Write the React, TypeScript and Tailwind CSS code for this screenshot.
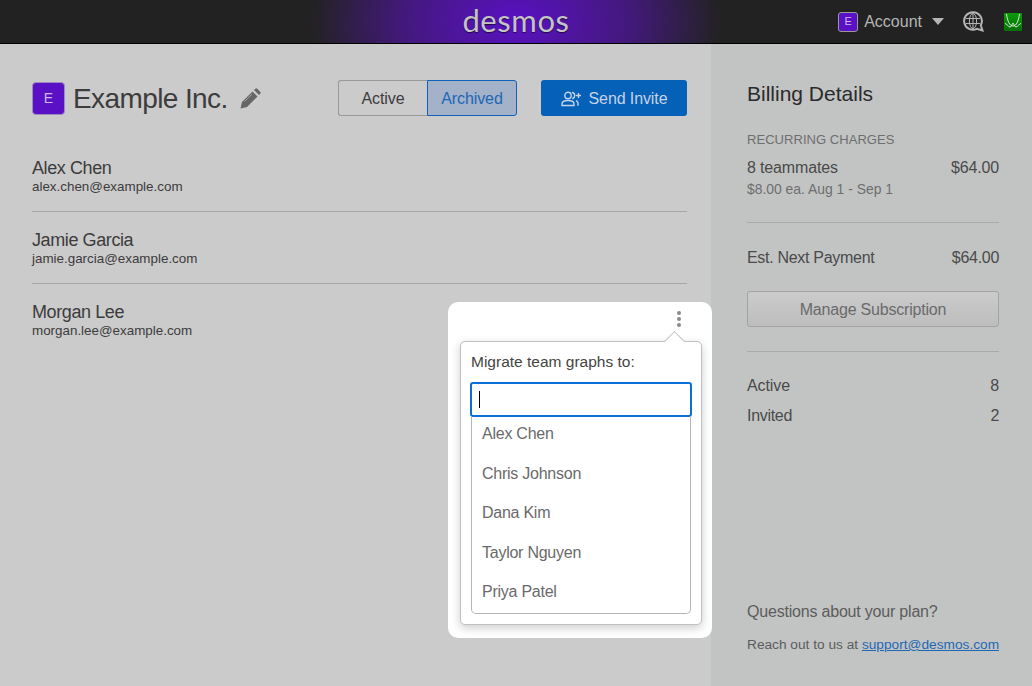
const members = [
  { name: 'Alex Chen', email: 'alex.chen@example.com' },
  { name: 'Jamie Garcia', email: 'jamie.garcia@example.com' },
  { name: 'Morgan Lee', email: 'morgan.lee@example.com' },
];

const options = ['Alex Chen', 'Chris Johnson', 'Dana Kim', 'Taylor Nguyen', 'Priya Patel'];

function Header() {
  return (
    <div className="relative h-[44px] flex items-center justify-end bg-[#222222] border-b border-black">
      <div className="absolute left-[310px] top-0 h-[43px] w-[412px] bg-[radial-gradient(ellipse_50%_300%_at_center,#5a10c4_0%,#43197c_55%,#222222_100%)] flex items-center justify-center">
        <span className="text-[31px] leading-none text-[#c4c4c4] tracking-[0.6px] font-['Lato',sans-serif] pb-[3px] [text-shadow:0_1px_1px_rgba(0,0,0,0.6)]">desmos</span>
      </div>
      <div className="relative flex items-center text-[#b5b5b5] pr-[10px]">
        <div className="w-[20px] h-[20px] rounded-[3px] border border-[#9a9a9a] bg-[#5a10c4] text-[#cdb8ea] text-[11px] flex items-center justify-center">E</div>
        <span className="ml-[6px] text-[16px]">Account</span>
        <div className="ml-[10px] w-0 h-0 border-l-[6.5px] border-r-[6.5px] border-t-[7px] border-l-transparent border-r-transparent border-t-[#b5b5b5]" />
        <svg className="ml-[19px]" width="21" height="21" viewBox="0 0 21 21" fill="none" stroke="#b5b5b5">
          <path d="M10 1.200a8.800 8.800 0 1 0 3.800 16.700l5.700 1.600-1.700-5.300a8.800 8.800 0 0 0-7.800-13z" strokeWidth="2" fill="#222222" />
          <ellipse cx="10" cy="10" rx="3.600" ry="7.500" strokeWidth="1" />
          <path d="M10 2.500v15M3 7.500h14M3 12.500h14" strokeWidth="1" />
        </svg>
        <svg className="ml-[20px]" width="18" height="18" viewBox="0 0 18 18" fill="none">
          <defs>
            <linearGradient id="graph-green" x1="0" y1="0" x2="0" y2="1">
              <stop offset="0" stopColor="#0b9c0b" />
              <stop offset="1" stopColor="#066f06" />
            </linearGradient>
          </defs>
          <rect width="18" height="18" rx="1" fill="url(#graph-green)" />
          <path d="M2.500 1c1 7 3 12 6.500 12s5.500-5 6.500-12" stroke="#d5ecd5" strokeWidth="1" />
          <path d="M1 10.500c2 0 3 3.500 5 3.500s2-4 3-4 1 4 3 4 3-3.500 5-3.500" stroke="#d5ecd5" strokeWidth="1" />
        </svg>
      </div>
    </div>
  );
}

function MigratePopup() {
  return (
    <div className="absolute left-[448px] top-[302px] w-[264px] h-[336px] bg-white rounded-[10px] z-10">
      <div className="absolute left-[229px] top-[9px] flex flex-col gap-[2px]">
        {[0, 1, 2].map((i) => (
          <div key={i} className="w-[4px] h-[4px] rounded-full bg-[#8a8a8a]" />
        ))}
      </div>
      <div className="absolute left-[12px] top-[39px] w-[242px] h-[284px] rounded-[5px] border border-[#c0c0c0] bg-white shadow-[0_3px_10px_rgba(0,0,0,0.2)] px-[10px] pt-[10px]">
        <div className="absolute left-[206px] top-[-8px] w-[15px] h-[15px] rotate-45 bg-white border-l border-t border-[#c0c0c0]" />
        <div className="relative text-[15.5px] leading-[20px] text-[#444444]">Migrate team graphs to:</div>
        <div className="relative mt-[10px] -mx-px h-[35px] rounded-[3px] border-2 border-[#0a6fd8] flex items-center pl-[7px]">
          <div className="w-px h-[17px] bg-black" />
        </div>
        <div className="relative mt-[-1px] h-[198px] rounded-b-[5px] border border-t-0 border-[#b5b5b5]">
          {options.map((o) => (
            <div key={o} className="h-[39.500px] pl-[10px] pb-[3px] flex items-center text-[16px] tracking-[-0.25px] text-[#6a6a6a]">{o}</div>
          ))}
        </div>
      </div>
    </div>
  );
}

export default function App() {
  return (
    <div className="relative w-[1032px] h-[686px] overflow-hidden flex flex-col bg-[#cbcbcb] font-['Liberation_Sans',sans-serif]">
      <Header />
      <div className="flex flex-1">
        <div className="w-[711px] pl-[32px] pr-[24px] pt-[36px]">
          <div className="flex items-center h-[36px]">
            <div className="w-[33px] h-[33px] rounded-[4px] border border-[#9d8ac0] bg-[#5a10c4] text-[#cdb8ea] text-[14px] flex items-center justify-center">E</div>
            <span className="ml-[8px] pt-[1px] text-[28px] tracking-[-0.6px] text-[#3c3c3c]">Example Inc.</span>
            <svg className="ml-[12px]" width="21" height="21" viewBox="0 0 21 21" fill="#666666">
              <path d="M.5 20.500l1.500-6.500 10.500-10.500 5 5-10.500 10.500z" />
              <path d="M14 2l1.300-1.200a1.500 1.500 0 0 1 2 0l2.900 2.900a1.500 1.500 0 0 1 0 2l-1.200 1.300z" />
              <path d="M4.500 13.500l7.500-7.500" stroke="#a0a0a0" strokeWidth="1" />
            </svg>
            <div className="ml-auto flex h-[36px] text-[16px] tracking-[-0.1px]">
              <div className="w-[89px] pt-[1px] flex items-center justify-center rounded-l-[3px] border border-r-0 border-[#999999] text-[#3c3c3c]">Active</div>
              <div className="w-[90px] pt-[1px] flex items-center justify-center rounded-r-[3px] border border-[#0f62b8] bg-[#a3b1c9] text-[#1d67b5]">Archived</div>
            </div>
            <div className="ml-[24px] w-[146px] h-[36px] pt-[1px] rounded-[3px] bg-[#0560b8] text-[#c5d3e6] text-[16px] tracking-[-0.1px] flex items-center justify-center gap-[8px]">
              <svg width="20" height="16" viewBox="0 0 20 16" fill="none" stroke="#c5d3e6" strokeWidth="1.400" strokeLinecap="round">
                <circle cx="7" cy="4.500" r="3.200" />
                <path d="M1 14.500v-1.500c0-2.500 2.500-3.500 6-3.500s6 1 6 3.500v1.500z" />
                <path d="M11.500 1.500c1.500.3 2.200 1.500 2.200 3s-.7 2.500-2 3M15.500 9.800c.9.500 1.500 1.300 1.500 2.500v2M17.500 2.500v4M15.500 4.500h4" />
              </svg>
              Send Invite
            </div>
          </div>
          <div className="mt-[24px]">
            {members.map((m, i) => (
              <div key={m.email} className={i < members.length - 1 ? 'h-[72px] border-b border-[#a8a8a8] pt-[17px]' : 'h-[72px] pt-[17px]'}>
                <div className="text-[18px] leading-[22px] tracking-[-0.4px] text-[#3c3c3c]">{m.name}</div>
                <div className="text-[13.400px] leading-[16px] text-[#3c3c3c]">{m.email}</div>
              </div>
            ))}
          </div>
        </div>
        <div className="w-[321px] flex flex-col bg-[#c2c4c3] pl-[36px] pr-[33px] pt-[36px] pb-[32px] text-[#4a4a4a]">
          <div className="text-[21px] leading-[28px] text-[#2a2a2a]">Billing Details</div>
          <div className="mt-[23px] text-[13px] leading-[18px] tracking-[0.05px] text-[#6e6e6e]">RECURRING CHARGES</div>
          <div className="mt-[9px] flex justify-between text-[16px] leading-[20px] tracking-[-0.15px]"><span>8 teammates</span><span>$64.00</span></div>
          <div className="mt-[2px] text-[13.900px] leading-[18px] text-[#6e6e6e]">$8.00 ea. Aug 1 - Sep 1</div>
          <div className="mt-[24px] border-t border-[#a9abaa]" />
          <div className="mt-[25px] flex justify-between text-[16px] leading-[20px] tracking-[-0.3px]"><span>Est. Next Payment</span><span>$64.00</span></div>
          <div className="mt-[23px] h-[36px] pt-[2px] rounded-[3px] border border-[#a3a3a3] bg-gradient-to-b from-[#cbcbcb] to-[#bdbdbd] text-[#6a6a6a] text-[16px] tracking-[-0.2px] flex items-center justify-center">Manage Subscription</div>
          <div className="mt-[24px] border-t border-[#a9abaa]" />
          <div className="mt-[24px] flex justify-between text-[16px] leading-[20px] tracking-[-0.1px]"><span>Active</span><span>8</span></div>
          <div className="mt-[10px] flex justify-between text-[16px] leading-[20px] tracking-[-0.3px]"><span>Invited</span><span>2</span></div>
          <div className="mt-auto text-[16px] leading-[20px] tracking-[-0.2px] text-[#5c5c5c]">Questions about your plan?</div>
          <div className="mt-[14px] text-[13.700px] leading-[18px] text-[#5c5c5c] whitespace-nowrap">
            Reach out to us at <span className="underline text-[#1d67b5]">support@desmos.com</span>
          </div>
        </div>
      </div>
      <MigratePopup />
    </div>
  );
}
